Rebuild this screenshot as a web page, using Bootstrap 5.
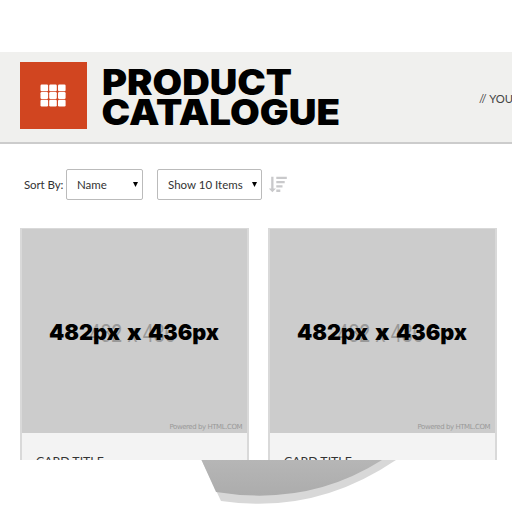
<!DOCTYPE html>
<html lang="en">
<head>
<meta charset="utf-8">
<meta name="viewport" content="width=device-width, initial-scale=1">
<title>Product Catalogue</title>
<link href="https://cdn.jsdelivr.net/npm/bootstrap@5.3.0/dist/css/bootstrap.min.css" rel="stylesheet">
<style>
body{font-family:Lato,sans-serif;font-size:12px;line-height:18px;color:#333;height:512px;background:#fff}
.screen{height:460px;padding-top:52px}
.masthead{height:92px;background:#f0f0ee;border-bottom:2px solid #ccc;padding:10px 0 0 20px}
.tile{width:67px;height:67px;background:#d14520}
.brand{width:250px;height:70px;margin:0 0 0 14px}
.brand svg,.item svg text{font-family:Inter,sans-serif}
.crumb{margin:28px 0 0 128px;font-size:11.3px;color:#444}
.tools{height:31px;margin:25px 0 28px 24px;font-size:11.5px}
.caption{width:39px;white-space:nowrap;letter-spacing:-.1px}
.picker{border:1px solid #bbb;border-radius:2px;height:31px;padding:0 4px 0 10px;background:#fff;color:#333}
.picker-name{width:77px;margin-left:3px}
.picker-count{width:105px;margin-left:14px}
.order{margin-left:7px}
.items{padding-left:20px;gap:19px}
.item{width:229px;height:240px;border:2px solid #d9d9d9;border-top-width:1px;border-bottom:0;border-radius:0;background:#f3f3f3;--bs-card-border-radius:0}
.item svg{display:block;flex-shrink:0;width:225px;height:204px;background:#ccc}
.item h2{font-size:12.3px;line-height:18px;margin:19px 0 0 14px;color:#333;white-space:nowrap}
.curve{display:block;width:512px;height:52px}
</style>
<script src="https://cdn.jsdelivr.net/npm/bootstrap@5.3.0/dist/js/bootstrap.bundle.min.js"></script>
</head>
<body class="overflow-hidden">
<main class="screen overflow-hidden">
  <header class="masthead d-flex align-items-start overflow-hidden">
    <div class="tile flex-shrink-0">
      <svg class="d-block" width="67" height="67" fill="#fff">
        <g id="r"><rect x="20.500" y="22.5" width="7.6" height="6.8" rx="1.2"/><rect x="29.2" y="22.5" width="7.6" height="6.8" rx="1.2"/><rect x="38" y="22.5" width="7.6" height="6.8" rx="1.2"/></g>
        <use href="#r" y="7.6"/><use href="#r" y="15.2"/>
      </svg>
    </div>
    <h1 class="brand flex-shrink-0"><svg class="d-block" width="250" height="70" font-size="35" font-weight="900"><text x="1" y="32.5" textLength="190" lengthAdjust="spacingAndGlyphs">PRODUCT</text><text x="0.5" y="62.5" textLength="238.500" lengthAdjust="spacingAndGlyphs">CATALOGUE</text></svg></h1>
    <div class="crumb text-nowrap flex-shrink-0">// YOU</div>
  </header>
  <div class="tools d-flex align-items-center">
    <span class="caption">Sort By:</span>
    <div class="picker picker-name d-flex align-items-center justify-content-between"><span>Name</span><svg width="5" height="6"><path d="M0 0h5L2.5 5z" fill="#000"/></svg></div>
    <div class="picker picker-count d-flex align-items-center justify-content-between"><span>Show 10 Items</span><svg width="5" height="6"><path d="M0 0h5L2.5 5z" fill="#000"/></svg></div>
    <svg class="order" width="19" height="17" fill="#c9c9cb"><path d="M2.2 .7h2.300v11.800H7L3.400 16.200-.2 12.500h2.400zM7.300 .7h10.500v2.300h-10.500zM7.300 5h8.400v2.300H7.300zM7.300 9.300h6.200v2.300H7.300zM7.300 13.600h4v2.300h-4z"/></svg>
  </div>
  <section class="items d-flex">
    <article class="card item flex-shrink-0">
      <svg viewBox="0 0 225 204"><text x="67.500" y="112.5" style="font-family:'Liberation Sans',sans-serif" font-size="25" fill="#999" textLength="86" lengthAdjust="spacingAndGlyphs">482 x 436</text><g font-weight="900" font-size="22"><text x="27" y="111" textLength="71" lengthAdjust="spacingAndGlyphs">482px</text><text x="105" y="111" textLength="14.500" lengthAdjust="spacingAndGlyphs">x</text><text x="126" y="111" textLength="71" lengthAdjust="spacingAndGlyphs">436px</text></g><text x="147.500" y="200" style="font-family:'DejaVu Sans',sans-serif" font-size="7" fill="#999" textLength="73">Powered by HTML.COM</text></svg>
      <h2 class="fw-normal">CARD TITLE</h2>
    </article>
    <article class="card item flex-shrink-0">
      <svg viewBox="0 0 225 204"><text x="67.500" y="112.5" style="font-family:'Liberation Sans',sans-serif" font-size="25" fill="#999" textLength="86" lengthAdjust="spacingAndGlyphs">482 x 436</text><g font-weight="900" font-size="22"><text x="27" y="111" textLength="71" lengthAdjust="spacingAndGlyphs">482px</text><text x="105" y="111" textLength="14.500" lengthAdjust="spacingAndGlyphs">x</text><text x="126" y="111" textLength="71" lengthAdjust="spacingAndGlyphs">436px</text></g><text x="147.500" y="200" style="font-family:'DejaVu Sans',sans-serif" font-size="7" fill="#999" textLength="73">Powered by HTML.COM</text></svg>
      <h2 class="fw-normal">CARD TITLE</h2>
    </article>
  </section>
</main>
<svg class="curve" viewBox="0 0 512 52">
  <defs><linearGradient id="g" x2="0" y2="1"><stop stop-color="#b6b6b6"/><stop offset="1" stop-color="#acacac"/></linearGradient></defs>
  <path d="M201.500 0H396Q315 55 221 41Z" fill="#d8d8d8"/>
  <path d="M201.500 0H382Q308 47 216 32Z" fill="url(#g)"/>
</svg>
</body>
</html>
